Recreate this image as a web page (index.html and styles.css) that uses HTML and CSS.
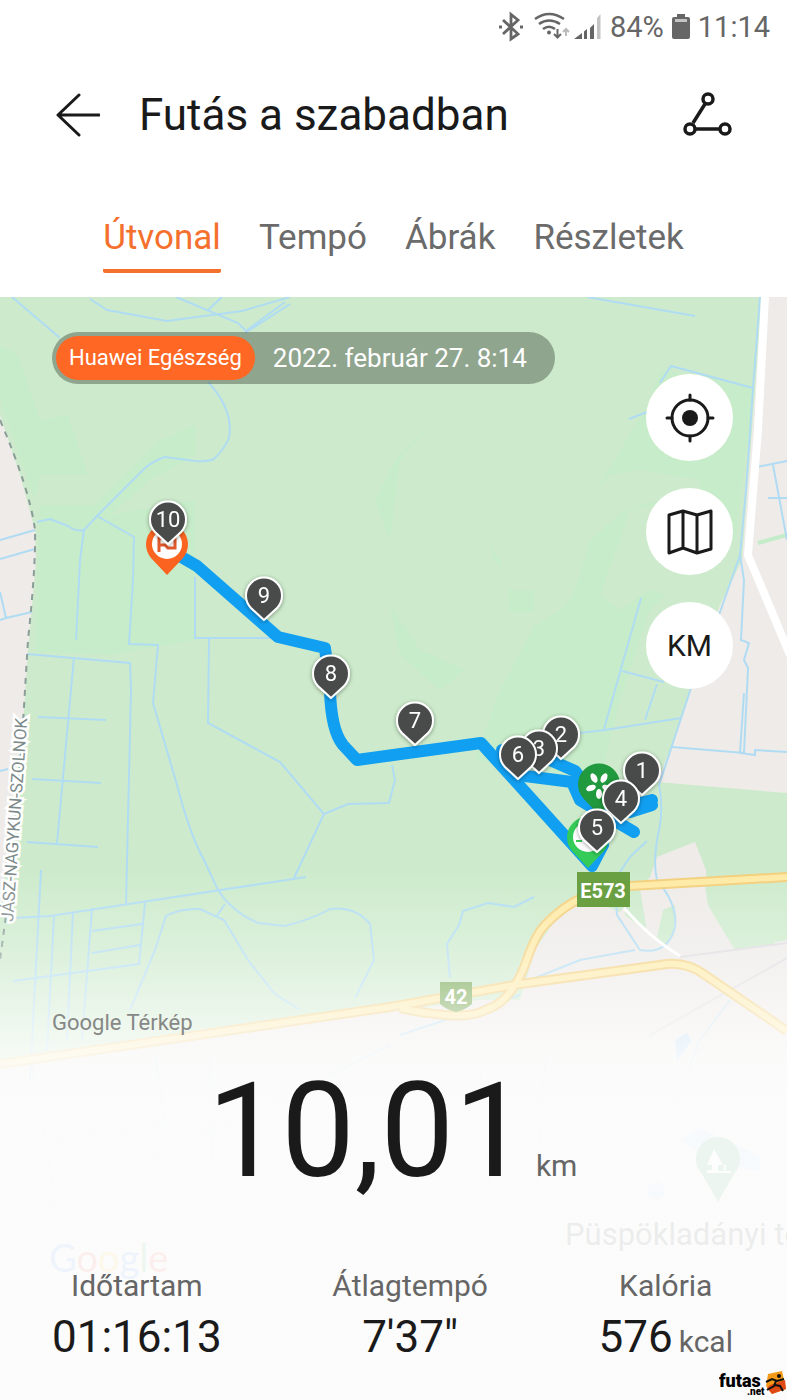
FILE: index.html
```html
<!DOCTYPE html>
<html lang="hu">
<head>
    <meta charset="UTF-8">
    <meta name="viewport" content="width=device-width, initial-scale=1.0">
    <title>Futás a szabadban</title>
    <link rel="stylesheet" href="styles.css">
</head>
<body>
    <div class="status-bar">
        <svg class="status-icons" width="104" height="32" viewBox="498 10 104 32" fill="none" stroke="#666">
            <!-- bluetooth -->
            <path d="M503 19L518 33L511 38V13.500L518 19L503 33" stroke-width="2.800"/>
            <path d="M499 26h3M520 26h3" stroke-width="3"/>
            <!-- wifi -->
            <path d="M535 18Q549 8 564 18M539 23Q549 16 560 23M543 28Q549 23.500 555 28" stroke-width="2.600"/>
            <circle cx="549" cy="31.500" r="2" fill="#666" stroke="none"/>
            <path d="M557.500 28v8M554 33l3.500 3.500l3.500-3.500" stroke-width="2"/>
            <path d="M566 35v-7M563 31l3-3l3 3" stroke="#bbb" stroke-width="2"/>
            <!-- signal -->
            <path d="M574 38L582 32V38ZM584 30.500L587 28V38H584ZM590 27L594 23V38H590Z" fill="#666" stroke="none"/>
            <path d="M597 17L600.500 13V38H597Z" fill="#c4c4c4" stroke="none"/>
        </svg>
        <span>84%</span>
        <svg width="18" height="28" viewBox="0 0 18 28">
            <path d="M5 1h8v3h3q2 0 2 2v18q0 2-2 2H2q-2 0-2-2V6q0-2 2-2h3z" fill="#666"/>
            <path d="M3 6h12v3H3z" fill="#c4c4c4"/>
        </svg>
        <span>11:14</span>
    </div>

    <header class="title-bar">
        <button class="icon-button" aria-label="Vissza">
            <svg width="48" height="48" viewBox="0 0 48 48" fill="none" stroke="#1a1a1a" stroke-width="3" stroke-linecap="round" stroke-linejoin="round">
                <path d="M47 24H6M27 4L6 24L27 44"/>
            </svg>
        </button>
        <h1>Futás a szabadban</h1>
        <button class="icon-button" aria-label="Megosztás">
            <svg width="50" height="48" viewBox="683 90 50 48" fill="none" stroke="#1a1a1a" stroke-width="3.500">
                <path d="M705 103L693 122M696 128H720"/>
                <circle cx="708" cy="98" r="5"/>
                <circle cx="690" cy="128" r="5"/>
                <circle cx="725" cy="128" r="5"/>
            </svg>
        </button>
    </header>

    <nav class="tabs">
        <button class="tab active">Útvonal</button>
        <button class="tab">Tempó</button>
        <button class="tab">Ábrák</button>
        <button class="tab">Részletek</button>
    </nav>

    <main class="route">
        <svg class="map" viewBox="0 297 787 1103" preserveAspectRatio="xMidYMin slice">
            <defs>
                <linearGradient id="fade" x1="0" y1="297" x2="0" y2="1400" gradientUnits="userSpaceOnUse">
                    <stop offset="0.520" stop-color="#fdfdfd" stop-opacity="0"/>
                    <stop offset="0.590" stop-color="#fdfdfd" stop-opacity="0.300"/>
                    <stop offset="0.650" stop-color="#fdfdfd" stop-opacity="0.640"/>
                    <stop offset="0.690" stop-color="#fdfdfd" stop-opacity="0.860"/>
                    <stop offset="0.730" stop-color="#fdfdfd" stop-opacity="0.920"/>
                    <stop offset="1" stop-color="#fdfdfd" stop-opacity="0.920"/>
                </linearGradient>
                <filter id="shadow" x="-30%" y="-30%" width="160%" height="160%">
                    <feDropShadow dx="0" dy="1" stdDeviation="2" flood-opacity="0.400"/>
                </filter>
                <path id="pin" d="M0 25L-13 13A18 18 0 1 1 13 13Z"/>
                <path id="big-pin" d="M0 31L-16 14A21 21 0 1 1 16 14Z"/>
            </defs>

            <rect y="297" width="787" height="1103" fill="#cdebcc"/>

            <!-- woods -->
            <g fill="#c7ecc9">
                <path d="M0 345L18 355L40 420L68 415L88 475L40 475L35 500L0 400Z"/>
                <path d="M40 505L95 505L160 440L195 425L196 455L150 480L110 515L195 500L195 640L110 655L35 652Z"/>
                <path d="M430 425L400 460L390 540L375 500L395 460Z"/>
                <path d="M390 605L420 650L465 670L440 690L400 655Z"/>
                <path d="M660 370L650 400L597 490L610 475L640 470L700 480L700 490L640 505L625 510L590 540L580 575L570 600L560 610L535 625L500 690L475 760L600 780L620 700L650 610L700 560L735 540L750 420L755 385Z"/>
                <path d="M508 590h26v22h-24zM490 542l14 27l-10-8z"/>
            </g>
            <g fill="#cdebcc">
                <path d="M630 508L700 502L715 560L680 600L650 590L620 610L600 595L620 540Z"/>
            </g>

            <!-- built-up land -->
            <g fill="#eeebe8">
                <path d="M0 415L20 475L35 530L36 560L28 650L22 740L0 915Z"/>
                <path d="M762 297L787 297V793L657 782L672 745L690 690L720 605L742 560L752 430Z"/>
                <path d="M520 1000L535 950L565 905L590 900L620 912L650 877L657 857L695 842L706 870L708 905L735 950L787 940V1400H0V1062L480 1000Z"/>
            </g>
            <g fill="#cdebcc">
                <path d="M705 885L787 880V912L768 910L775 945L735 950L708 905Z"/>
                <path d="M640 888L647 932L625 915L625 888Z"/>
                <path d="M663 910L675 905L674 935L665 945L657 938Z"/>
            </g>
            <path d="M758 543L787 535" fill="none" stroke="#c5ecc8" stroke-width="4"/>

            <!-- canals and streams -->
            <g class="water">
                <path d="M12 297L60 338M90 299L107 310L167 321L242 311L290 297M176 297L238 323L246 331L285 302M222 297L208 310M245 333L290 304"/>
                <path d="M208 382Q234 410 229 438Q225 448 214 459Q208 462 195 461L165 457Q155 460 145 468L97 516L84 530Q76 532 68 526L50 519L37 522"/>
                <path d="M97 516L134 537L133 580L129 644L158 645L153 703L177 785Q190 835 204 860L218 890Q232 912 258 923L285 926Q315 918 330 909Q355 906 370 924L374 960L355 998"/>
                <path d="M84 530L80 560L76 640M195 577V638H272M209 638L208 723L280 762L324 814L294 878M324 814L348 804L389 803L395 780L392 765"/>
                <path d="M27 654L130 663L131 690L126 904M74 657L57 843M38 717L106 720M32 779L101 783M27 842L98 847"/>
                <path d="M13 918L50 916L306 877M41 870L30 1080M54 916L47 1050M73 912L67 1040M92 908L82 1040M145 903L139 964L13 981M92 931L142 924M92 953L140 945"/>
                <path d="M225 904L216 917M130 1010L155 950L166 916Q180 908 200 909L224 920L248 960L275 994L300 1010"/>
                <path d="M0 540L35 530M0 559L35 549M0 592L6 618L32 612M0 620L6 618M0 771L8 769"/>
                <path d="M587 297L695 316M629 419L647 412M660 383L671 366L753 388M760 297L753 388L746 490L740 555L719 615L690 691L659 785Q663 805 660 825Q652 860 657 880Q678 905 675 927Q668 955 640 950L617 915Q615 900 622 880"/>
                <path d="M757 467L787 461M773 465L787 540M768 498H787M740 555L744 580L741 640L749 643L744 660L748 668L744 753L672 747M744 693L740 753L755 755L755 750L787 752M641 598L604 729M622 671L664 682M657 684L645 720M580 733L605 730L681 718"/>
                <path d="M450 978L447 944L459 925L463 911L488 903L514 907L534 897M530 980L580 960L635 950M647 841L630 857L620 872M400 1035L520 995"/>
            </g>
            <g class="water faint">
                <path d="M32 1065L45 1140L55 1200M155 1055L165 1125L50 1140M0 1226L300 1090L390 1045M210 1060L213 1195M480 1070L490 1190L465 1270M545 1060L535 1210M660 1140L700 1040L730 1000"/>
            </g>
            <path d="M675 1040l12-7l4 8l-14 20zM680 1140l20-12l60 28v16l-50-12z" fill="#b5d9f5"/>
            <circle cx="656" cy="1191" r="9" fill="#b5d9f5"/>

            <!-- county border -->
            <path d="M0 420Q30 490 35 530Q36 565 28 640L22 740L8 900L0 960" class="border-line"/>

            <!-- roads -->
            <path d="M765 297L758 430L748 555L790 655" fill="none" stroke="#fff" stroke-width="8"/>
            <path d="M624 908Q650 938 680 956" fill="none" stroke="#fff" stroke-width="3"/>
            <path d="M680 957L787 943M650 1035L787 958" fill="none" stroke="#dddbe0" stroke-width="2"/>
            <g class="road-edge">
                <path d="M787 877L630 886Q580 888 545 925Q535 935 525 965Q510 1003 485 1010Q465 1022 400 1008"/>
                <path d="M0 1064L390 1007L520 984L660 965Q685 960 705 975L787 1031"/>
            </g>
            <g class="road">
                <path d="M787 877L630 886Q580 888 545 925Q535 935 525 965Q510 1003 485 1010Q465 1022 400 1008"/>
                <path d="M0 1064L390 1007L520 984L660 965Q685 960 705 975L787 1031"/>
            </g>

            <text class="county" transform="translate(13 922) rotate(-86)">JÁSZ-NAGYKUN-SZOLNOK</text>

            <path d="M440 982H472V1004Q465 1010 456 1012Q447 1010 440 1004Z" fill="#6ba043"/>

            <path d="M718 1202L702 1174A22 22 0 1 1 734 1174Z" fill="#2c9657"/>
            <path d="M714 1149l-7 16h5v5h-5v3h24v-2h-5v-6h-2v6h-6v-6h5z" fill="#fff"/>
            <text class="place" x="565" y="1245">Püspökladányi te</text>
            <text class="google" x="49" y="1272"><tspan fill="#4285f4">G</tspan><tspan fill="#ea4335">o</tspan><tspan fill="#fbbc05">o</tspan><tspan fill="#4285f4">g</tspan><tspan fill="#34a853">l</tspan><tspan fill="#ea4335">e</tspan></text>

            <rect y="297" width="787" height="1103" fill="url(#fade)"/>
            <text class="shield" x="456" y="1004">42</text>

            <!-- recorded track -->
            <g class="track">
                <path d="M178 555L197 566L278 637L325 648L330 690Q331 730 343 745L357 760L481 743L592 866L603 845"/>
                <path d="M502 750L525 776L572 782L580 800L600 812L634 832"/>
                <path d="M550 760L575 771L597 800L630 812L652 805"/>
                <path d="M630 806L652 800"/>
            </g>

            <path d="M577 872H630V907H577Z" fill="#6a9f42"/>
            <text class="shield" x="603" y="898">E573</text>

            <!-- finish and start markers -->
            <g transform="translate(167 544)">
                <use href="#big-pin" fill="#fa6420"/>
                <circle r="15" fill="#fff"/>
                <path d="M-8 8V-6H8V4H1L-2 1H-8" fill="none" stroke="#e2592c" stroke-width="3"/>
            </g>
            <g transform="translate(599 784)">
                <use href="#big-pin" fill="#21993e"/>
                <g fill="#fff">
                    <ellipse cx="-5" cy="-6" rx="3" ry="5" transform="rotate(-28 -5 -6)"/>
                    <ellipse cx="5" cy="-6" rx="3" ry="5" transform="rotate(28 5 -6)"/>
                    <ellipse cx="-8" cy="4" rx="5" ry="3" transform="rotate(-20 -8 4)"/>
                    <ellipse cx="8" cy="4" rx="5" ry="3" transform="rotate(20 8 4)"/>
                    <ellipse cx="0" cy="10" rx="3" ry="5"/>
                </g>
            </g>
            <g transform="translate(588 837)">
                <use href="#big-pin" fill="#35cb58"/>
                <circle r="15" fill="#fff"/>
                <path d="M-12 4h6" stroke="#35cb58" stroke-width="2"/>
            </g>

            <!-- kilometre markers -->
            <g class="km-pin" transform="translate(168 519)"><use href="#pin"/><text y="8">10</text></g>
            <g class="km-pin" transform="translate(264 595)"><use href="#pin"/><text y="8">9</text></g>
            <g class="km-pin" transform="translate(331 673)"><use href="#pin"/><text y="8">8</text></g>
            <g class="km-pin" transform="translate(415 720)"><use href="#pin"/><text y="8">7</text></g>
            <g class="km-pin" transform="translate(561 734)"><use href="#pin"/><text y="8">2</text></g>
            <g class="km-pin" transform="translate(539 748)"><use href="#pin"/><text y="8">3</text></g>
            <g class="km-pin" transform="translate(518 754)"><use href="#pin"/><text y="8">6</text></g>
            <g class="km-pin" transform="translate(642 770)"><use href="#pin"/><text y="8">1</text></g>
            <g class="km-pin" transform="translate(621 798)"><use href="#pin"/><text y="8">4</text></g>
            <g class="km-pin" transform="translate(597 827)"><use href="#pin"/><text y="8">5</text></g>
        </svg>

        <div class="overlay">
            <div class="overlay-top">
                <div class="source">
                    <span class="source-app">Huawei Egészség</span>
                    <time datetime="2022-02-27T08:14">2022. február 27. 8:14</time>
                </div>
                <div class="map-buttons">
                    <button class="round-button" aria-label="Középre">
                        <svg width="50" height="50" viewBox="0 0 50 50" fill="none" stroke="#1a1a1a" stroke-width="3" stroke-linecap="round">
                            <circle cx="25" cy="25" r="18"/>
                            <circle cx="25" cy="25" r="8" fill="#1a1a1a" stroke="none"/>
                            <path d="M25 2V7M25 43V48M2 25H7M43 25H48"/>
                        </svg>
                    </button>
                    <button class="round-button" aria-label="Térkép típusa">
                        <svg width="50" height="50" viewBox="0 0 50 50" fill="none" stroke="#1a1a1a" stroke-width="3" stroke-linejoin="round">
                            <path d="M4 8L18 4L32 8L46 4V42L32 46L18 41L4 46ZM18 4V41M32 8V46"/>
                        </svg>
                    </button>
                    <button class="round-button">KM</button>
                </div>
            </div>

            <p class="attribution">Google Térkép</p>
            <p class="distance">10,01<span class="unit">km</span></p>
            <dl class="stats">
                <div>
                    <dt>Időtartam</dt>
                    <dd>01:16:13</dd>
                </div>
                <div>
                    <dt>Átlagtempó</dt>
                    <dd>7'37"</dd>
                </div>
                <div>
                    <dt>Kalória</dt>
                    <dd>576<span class="unit">kcal</span></dd>
                </div>
            </dl>
        </div>

        <svg class="watermark" width="68" height="30" viewBox="0 0 68 30">
            <text x="0" y="17" class="mark-name">futas</text>
            <text x="28" y="25" class="mark-net">.net</text>
            <path d="M49 4L63 1L67 19L53 24L47 16Z" fill="#f39a18"/>
            <path d="M51 15L66 10L67 19L53 24L48 18Z" fill="#e04a14"/>
            <path d="M47 12L53 9L58 11L65 9M57 11L55 16L48 20M56 15L61 16L64 21" fill="none" stroke="#111" stroke-width="2"/>
            <circle cx="60" cy="6" r="2" fill="#111"/>
        </svg>
    </main>
</body>
</html>
```
FILE: styles.css
```css
* {
    box-sizing: border-box;
}

body {
    margin: 0;
    min-height: 100vh;
    display: flex;
    flex-direction: column;
    background: #fff;
    color: #1a1a1a;
    font-family: Roboto, "Liberation Sans", sans-serif;
}

button {
    padding: 0;
    border: none;
    background: none;
    color: inherit;
    font-family: inherit;
    cursor: pointer;
}

svg {
    display: block;
}

.status-bar {
    display: flex;
    justify-content: flex-end;
    align-items: center;
    gap: 8px;
    height: 53px;
    padding-right: 17px;
    color: #666;
    font-size: 29px;
}

.title-bar {
    display: flex;
    align-items: center;
    height: 123px;
    padding: 0 54px 0 52px;
}

.title-bar h1 {
    flex: 1;
    margin: 0 0 0 39px;
    font-size: 44px;
    font-weight: 400;
}

.tabs {
    display: flex;
    justify-content: center;
    gap: 38px;
    padding: 34px 0 24px;
}

.tab {
    padding: 6px 0 9px;
    border-bottom: 4px solid transparent;
    border-radius: 2px;
    color: #6b6b6b;
    font-size: 35px;
    line-height: 44px;
}

.tab.active {
    border-color: #f4702c;
    color: #f4702c;
}

.route {
    position: relative;
    flex: 1;
    display: flex;
    overflow: hidden;
}

/* the map lies under the whole route view */
.map {
    position: absolute;
    top: 0;
    left: 0;
    width: 100%;
    height: 100%;
}

.water {
    fill: none;
    stroke: #b0dcf3;
    stroke-width: 2;
}

.faint {
    opacity: 0.5;
}

.border-line {
    fill: none;
    stroke: #8b9d98;
    stroke-width: 2;
    stroke-dasharray: 6 6;
}

.road-edge {
    fill: none;
    stroke: #f3cf7c;
    stroke-width: 10;
}

.road {
    fill: none;
    stroke: #feeaa4;
    stroke-width: 6;
}

.track {
    fill: none;
    stroke: #119ff1;
    stroke-width: 12;
    stroke-linecap: round;
    stroke-linejoin: round;
}

.county {
    fill: #7d8a8a;
    stroke: #fff;
    stroke-width: 5;
    paint-order: stroke;
    font-size: 17px;
}

.shield {
    fill: #fff;
    font-size: 20px;
    font-weight: 700;
    text-anchor: middle;
}

.place {
    fill: #203028;
    font-size: 31px;
}

.google {
    font-family: Lato, sans-serif;
    font-size: 38px;
}

.km-pin {
    fill: #4a4b4b;
    stroke: #fff;
    stroke-width: 2;
    filter: url(#shadow);
}

.km-pin text {
    fill: #fff;
    stroke: none;
    font-size: 22px;
    text-anchor: middle;
}

.overlay {
    position: relative;
    flex: 1;
    display: flex;
    flex-direction: column;
    padding: 35px 54px 36px 52px;
}

.overlay-top {
    display: flex;
    justify-content: space-between;
    align-items: flex-start;
}

.source {
    display: flex;
    align-items: center;
    gap: 18px;
    height: 52px;
    padding: 4px 28px 4px 4px;
    border-radius: 26px;
    background: rgba(50, 60, 50, 0.4);
    color: #fff;
    font-size: 26px;
}

.source-app {
    padding: 0 13px;
    border-radius: 22px;
    background: #ff6724;
    font-size: 22px;
    line-height: 44px;
}

.map-buttons {
    display: flex;
    flex-direction: column;
    gap: 27px;
    padding-top: 42px;
}

.round-button {
    display: flex;
    align-items: center;
    justify-content: center;
    width: 87px;
    height: 87px;
    border-radius: 50%;
    background: #fff;
    font-size: 30px;
}

.attribution {
    margin: auto 0 0;
    color: #868886;
    font-size: 22px;
    line-height: 28px;
}

.distance {
    display: flex;
    justify-content: center;
    align-items: baseline;
    gap: 8px;
    margin: 16px 0 53px;
    font-size: 131px;
    line-height: 156px;
}

.unit {
    color: #666;
    font-size: 30px;
    line-height: 36px;
}

.stats {
    display: flex;
    justify-content: space-between;
    margin: 0;
    text-align: center;
}

.stats dt {
    color: #666;
    font-size: 30px;
    line-height: 48px;
}

.stats dd {
    margin: 0;
    font-size: 44px;
    line-height: 54px;
}

.stats .unit {
    margin-left: 6px;
}

.watermark {
    position: absolute;
    right: 0;
    bottom: 0;
}

.mark-name {
    font-size: 18px;
    font-weight: 900;
}

.mark-net {
    font-size: 10px;
    font-weight: 900;
}
```
